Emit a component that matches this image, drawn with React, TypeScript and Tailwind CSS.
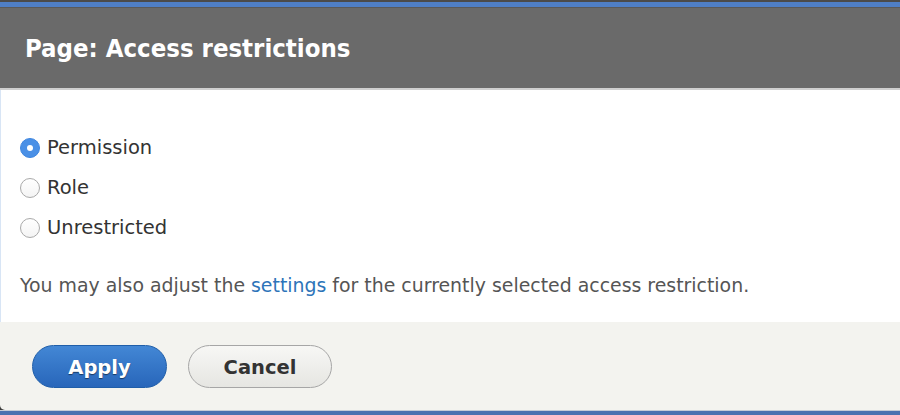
import React from "react";

function Radio({ checked, label }: { checked?: boolean; label: string }) {
  return (
    <label className="flex h-[40px] items-center">
      {checked ? (
        <span className="flex h-[20px] w-[20px] items-center justify-center rounded-full border border-[#3f86e0] bg-[#4a90e6]">
          <span className="h-[6px] w-[6px] rounded-full bg-white" />
        </span>
      ) : (
        <span className="h-[20px] w-[20px] rounded-full border border-[#a9a9a9] bg-gradient-to-b from-white to-[#f4f4f4]" />
      )}
      <span className="ml-[7px] text-[19.5px] text-[#333]">{label}</span>
    </label>
  );
}

export default function App() {
  return (
    <div
      className="flex h-[415px] w-[900px] flex-col overflow-hidden bg-[#3d3d3d]"
      style={{ fontFamily: '"DejaVu Sans", "Liberation Sans", sans-serif' }}
    >
      <div className="h-[2px] bg-[#4b4b4b]" />
      <div className="h-[5px] bg-[#4f7fc6]" />
      <div className="h-[1px] bg-[#5a5a5a]" />
      <div className="flex h-[80px] items-center bg-[#6a6a6a] pl-[25px]">
        <h1
          className="text-[25.5px] font-bold text-white"
          style={{ fontFamily: '"DejaVu Sans Condensed", "DejaVu Sans", sans-serif', fontStretch: "condensed" }}
        >
          Page: Access restrictions
        </h1>
      </div>
      <div className="h-[2px] bg-[#cfcfcf]" />
      <div className="flex h-[232px] flex-col border-l border-[#d8e5f5] bg-white pl-[19px] pt-[38px]">
        <Radio checked label="Permission" />
        <Radio label="Role" />
        <Radio label="Unrestricted" />
        <p className="mt-[23px] text-[18.9px] leading-[28px] text-[#555]">
          You may also adjust the <a className="text-[#2d74b9]">settings</a> for the currently selected access
          restriction.
        </p>
      </div>
      <div className="flex h-[88px] gap-[21px] rounded-bl-[5px] bg-[#f3f3ef] pl-[32px] pt-[23px]">
        <button className="h-[43px] w-[135px] rounded-full border border-[#1f5ea9] bg-gradient-to-b from-[#4387d5] to-[#2866ba] pt-[3px] text-[19.5px] font-bold text-white [text-shadow:0_1px_1px_rgba(0,0,0,0.5)]">
          Apply
        </button>
        <button className="h-[43px] w-[144px] rounded-full border border-[#a6a6a6] bg-gradient-to-b from-[#f7f7f5] to-[#e6e6e2] pt-[3px] text-[19.5px] font-bold text-[#333]">
          Cancel
        </button>
      </div>
      <div className="h-[1px] bg-[#c5ccd6]" />
      <div className="flex-1 bg-[#4a72b0]" />
    </div>
  );
}
